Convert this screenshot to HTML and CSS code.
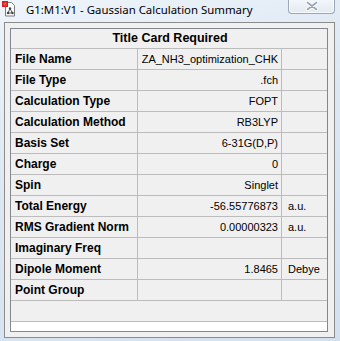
FILE: index.html
```html
<!DOCTYPE html>
<html lang="en">
<head>
  <meta charset="UTF-8">
  <title>G1:M1:V1 - Gaussian Calculation Summary</title>
  <link rel="stylesheet" href="styles.css">
</head>
<body>
  <div class="window">
    <!-- barra de titulo -->
    <div class="titlebar">
      <svg class="app-icon" width="14" height="16" viewBox="0 0 14 16">
        <path d="M3.5 1.5h6l3 3v10.5h-9z" fill="#fff" stroke="#7a7a7a"/>
        <rect x="0" y="0" width="6" height="6" fill="#d81b1b"/>
        <rect x="1.5" y="1.5" width="3" height="3" fill="#f05050"/>
        <path d="M8 7.5l-2 4.5M8 7.5l2.5 4.5M6 12h4.5" stroke="#555" stroke-width="1" fill="none"/>
        <circle cx="8" cy="7.5" r="1.2" fill="#444"/>
        <circle cx="6" cy="12" r="1.2" fill="#444"/>
        <circle cx="10.5" cy="12" r="1.2" fill="#444"/>
      </svg>
      <span class="title">G1:M1:V1 - Gaussian Calculation Summary</span>
      <button class="close-btn">
        <svg width="14" height="10" viewBox="0 0 14 10">
          <path d="M2.5 1.5l9 7M11.5 1.5l-9 7" stroke="#fff" stroke-width="3.4" stroke-linecap="round"/>
          <path d="M2.5 1.5l9 7M11.5 1.5l-9 7" stroke="#97a4b4" stroke-width="1.6" stroke-linecap="round"/>
        </svg>
      </button>
    </div>

    <div class="client">
      <div class="summary">
        <div class="grid">
          <div class="cell head">Title Card Required</div>

          <div class="cell label">File Name</div>
          <div class="cell value">ZA_NH3_optimization_CHK</div>
          <div class="cell unit"></div>

          <div class="cell label">File Type</div>
          <div class="cell value">.fch</div>
          <div class="cell unit"></div>

          <div class="cell label">Calculation Type</div>
          <div class="cell value">FOPT</div>
          <div class="cell unit"></div>

          <div class="cell label">Calculation Method</div>
          <div class="cell value">RB3LYP</div>
          <div class="cell unit"></div>

          <div class="cell label">Basis Set</div>
          <div class="cell value">6-31G(D,P)</div>
          <div class="cell unit"></div>

          <div class="cell label">Charge</div>
          <div class="cell value">0</div>
          <div class="cell unit"></div>

          <div class="cell label">Spin</div>
          <div class="cell value">Singlet</div>
          <div class="cell unit"></div>

          <div class="cell label">Total Energy</div>
          <div class="cell value">-56.55776873</div>
          <div class="cell unit">a.u.</div>

          <div class="cell label">RMS Gradient Norm</div>
          <div class="cell value">0.00000323</div>
          <div class="cell unit">a.u.</div>

          <div class="cell label">Imaginary Freq</div>
          <div class="cell value"></div>
          <div class="cell unit"></div>

          <div class="cell label">Dipole Moment</div>
          <div class="cell value">1.8465</div>
          <div class="cell unit">Debye</div>

          <div class="cell label">Point Group</div>
          <div class="cell value"></div>
          <div class="cell unit"></div>
        </div>
        <div class="filler"></div>
        <div class="white-strip"></div>
      </div>
    </div>
  </div>
</body>
</html>
```

FILE: styles.css
```css
body {
  margin: 0;
  padding: 0;
  width: 340px;
  height: 341px;
  overflow: hidden;
  background: linear-gradient(160deg, #eef4fa 0%, #dce7f2 45%, #d3e0ee 100%);
  font-family: 'Liberation Sans', Arial, sans-serif;
}

.window {
  display: flex;
  flex-direction: column;
  height: 341px;
}

.titlebar {
  height: 22px;
  display: flex;
  align-items: flex-start;
  position: relative;
}

.app-icon {
  margin: 1px 0 0 2px;
}

.title {
  margin-left: 10px;
  font-family: 'Noto Sans', sans-serif;
  font-size: 11.4px;
  line-height: 20px;
  color: #000;
}

.close-btn {
  position: absolute;
  top: -1px;
  left: 288px;
  width: 47px;
  height: 15px;
  padding: 0;
  border: 1px solid #9aa7b7;
  border-top: none;
  border-radius: 0 0 4px 4px;
  background: linear-gradient(#f4f7fb, #e3eaf2);
  box-shadow: inset 0 0 0 1px rgba(255,255,255,0.7);
  display: flex;
  justify-content: center;
  align-items: center;
}

.client {
  margin: 0 5px 3px 4px;
  flex: 1;
  border: 1px solid #8c8c8c;
  background: #f0f0f0;
  padding: 5px 6px 5px 5px;
  display: flex;
}

.summary {
  flex: 1;
  border: 1px solid #828790;
  display: flex;
  flex-direction: column;
  background: #f0f0f0;
}

.grid {
  display: grid;
  grid-template-columns: 126px 143px 45px;
  grid-template-rows: 19px;
  grid-auto-rows: 20px;
  gap: 1px;
  background: #bcbcbc;
  border-bottom: 1px solid #bcbcbc;
}

.cell {
  background: #f0f0f0;
  font-size: 11px;
  line-height: 20px;
  color: #000;
  white-space: nowrap;
  overflow: hidden;
}

.head {
  grid-column: 1 / 4;
  text-align: center;
  font-weight: bold;
  font-size: 12.5px;
  line-height: 19px;
  padding-left: 2px;
}

.label {
  font-weight: bold;
  font-size: 12px;
  padding-left: 4px;
}

.value {
  text-align: right;
  padding-right: 3px;
}

.unit {
  padding-left: 6px;
}

.filler {
  flex: 1;
}

.white-strip {
  height: 9px;
  border-top: 1px solid #bcbcbc;
  background: #fff;
}
```
